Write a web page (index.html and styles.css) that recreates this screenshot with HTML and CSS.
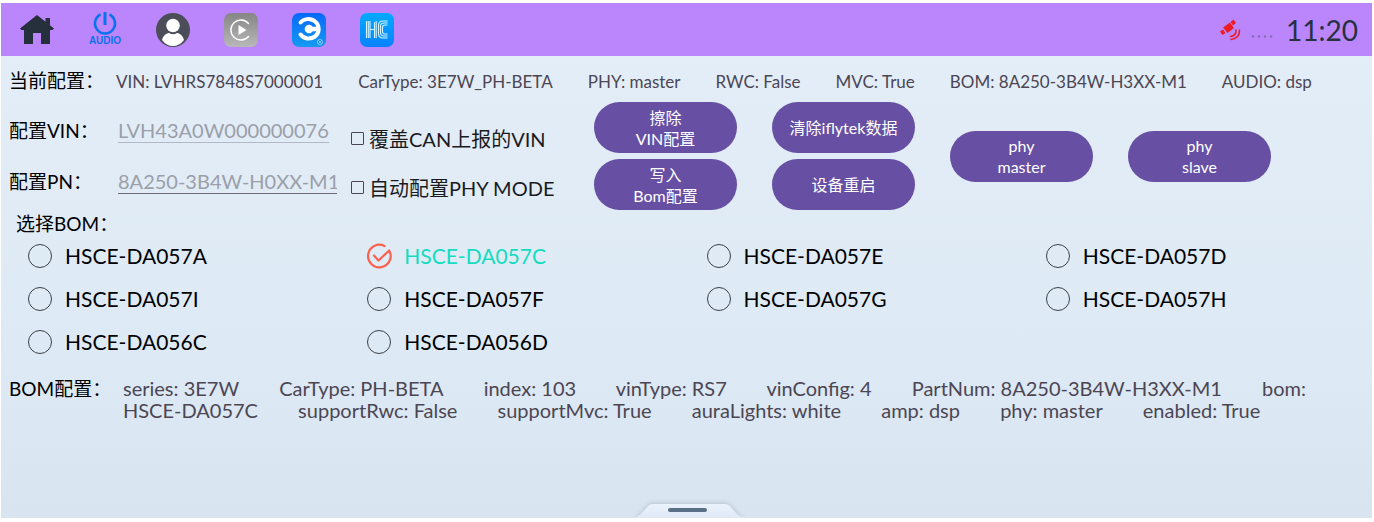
FILE: index.html
```html
<!DOCTYPE html>
<html lang="zh-CN">
<head>
<meta charset="utf-8">
<title>BOM配置</title>
<link rel="stylesheet" href="styles.css">
</head>
<body>
<div class="screen">
  <header class="topbar">
    <nav class="apps">
      <button class="app" aria-label="Home">
        <svg width="36" height="36" viewBox="0 0 36 36"><path fill="#25303c" d="M18 3 35 16.500 33.500 18H31V32H22V21H14V32H5V18H2.500L1 16.500ZM26.500 6H31V15L26.500 11Z"/></svg>
      </button>
      <button class="app" aria-label="Audio power">
        <svg width="36" height="36" viewBox="0 0 36 36"><g fill="none" stroke="#0a72f0" stroke-width="2.600"><path d="M13.500 2.500A10 10 0 1 0 22.500 2.500"/><path d="M18 0V13" stroke-width="3"/></g><text class="app-caption" x="18" y="32" text-anchor="middle" fill="#0a72f0">AUDIO</text></svg>
      </button>
      <button class="app" aria-label="User">
        <svg width="36" height="36" viewBox="0 0 36 36"><circle cx="18" cy="18" r="17" fill="#4b4e59"/><circle cx="18" cy="13.500" r="6.800" fill="#fff"/><path fill="#fff" d="M7 28C8 23.500 12 21 14 21Q18 23.500 22 21C24 21 28 23.500 29 28Q24.500 34 18 34T7 28Z"/></svg>
      </button>
      <button class="app" aria-label="CarPlay">
        <svg width="36" height="36" viewBox="0 0 36 36"><defs><linearGradient id="gray" x2="0" y2="1"><stop stop-color="#858585"/><stop offset="1" stop-color="#b8b8b8"/></linearGradient></defs><rect x="1" y="1" width="34" height="34" rx="7" fill="url(#gray)"/><path d="M25.500 11.500A10 10 0 1 0 25.500 24.500" fill="none" stroke="#fff" stroke-width="1.400" stroke-linecap="round"/><path d="M15.500 13V23L23.500 18Z" fill="#fff"/></svg>
      </button>
      <button class="app" aria-label="CarLife">
        <svg width="36" height="36" viewBox="0 0 36 36"><defs><linearGradient id="blue" x2="0" y2="1"><stop stop-color="#0868fa"/><stop offset="1" stop-color="#159af0"/></linearGradient></defs><rect x="1" y="1" width="34" height="34" rx="7" fill="url(#blue)"/><path d="M9.500 10.500C13 6.500 19 6 23.500 9C29.500 13.500 28.500 21 24 24.500C19 28 13 27 9.500 22.500" fill="none" stroke="#fff" stroke-width="4" stroke-linecap="round"/><path d="M18 17H27" stroke="#fff" stroke-width="4.500"/><circle cx="18" cy="17" r="4.300" fill="#fff"/><g fill="none" stroke="#8ccaff" stroke-width=".8"><circle cx="29" cy="30" r="2.600"/><path d="M27 28 31 32M31 28 27 32"/></g></svg>
      </button>
      <button class="app" aria-label="HiCar">
        <svg width="36" height="36" viewBox="0 0 36 36"><defs><linearGradient id="cyan" x2="0" y2="1"><stop stop-color="#00aaff"/><stop offset="1" stop-color="#0a82ff"/></linearGradient></defs><rect x="1" y="1" width="34" height="34" rx="7" fill="url(#cyan)"/><g fill="none" stroke="#d5f5ff" stroke-width="1.100"><path d="M7.500 9V26M9.300 9V26M11 9V26"/><path d="M11 17.500H16M15.500 10V26M17.200 9V26"/><path d="M28.500 9H24Q19.500 9 19.500 13.500V21.500Q19.500 26 24 26H28.500M28.500 11H25Q21.500 11 21.500 14.500V20.500Q21.500 24 25 24H28.500M28.500 13H26Q23.500 13 23.500 15.500V19.500Q23.500 22 26 22H28.500"/></g></svg>
      </button>
    </nav>
    <div class="status">
      <svg width="24" height="24" viewBox="0 0 24 24"><g fill="#ee1c25"><path d="M5 9.500 12 4.500 16 10 9.500 15Z"/><path d="M12.500 4 15.500 1.500 18 5 15 7.500ZM2 13.500 5 11.500 7.500 15 4.500 17Z"/></g><g fill="none" stroke="#ee1c25" stroke-width="1.500" stroke-linecap="round"><path d="M18 12Q18.500 17.500 12.500 18.500M21.500 12Q22 20 13 21.500"/></g></svg>
      <svg width="24" height="24" viewBox="0 0 24 24"><g fill="#8b6cb4"><circle cx="3" cy="18.500" r="1.300"/><circle cx="9" cy="18.500" r="1.300"/><circle cx="15" cy="18.500" r="1.300"/><circle cx="21" cy="18.500" r="1.300"/></g></svg>
      <time class="clock">11:20</time>
    </div>
  </header>

  <main class="content">
    <section class="current">
      <h2 class="heading">当前配置：</h2>
      <div class="facts">
        <span>VIN: LVHRS7848S7000001</span><span>CarType: 3E7W_PH-BETA</span><span>PHY: master</span><span>RWC: False</span><span>MVC: True</span><span>BOM: 8A250-3B4W-H3XX-M1</span><span>AUDIO: dsp</span>
      </div>
    </section>

    <form class="setup">
      <div class="fields">
        <label class="heading" for="vin">配置VIN：</label>
        <input class="field field-vin" id="vin" type="text" placeholder="LVH43A0W000000076">
        <label class="heading" for="pn">配置PN：</label>
        <input class="field field-pn" id="pn" type="text" placeholder="8A250-3B4W-H0XX-M1">
      </div>
      <div class="checks">
        <label class="check"><input type="checkbox">覆盖CAN上报的VIN</label>
        <label class="check"><input type="checkbox">自动配置PHY MODE</label>
      </div>
      <div class="actions">
        <div class="stack">
          <button class="pill" type="button">擦除<br>VIN配置</button>
          <button class="pill" type="button">写入<br>Bom配置</button>
        </div>
        <div class="stack">
          <button class="pill" type="button">清除iflytek数据</button>
          <button class="pill" type="button">设备重启</button>
        </div>
        <div class="stack"><button class="pill" type="button">phy<br>master</button></div>
        <div class="stack"><button class="pill" type="button">phy<br>slave</button></div>
      </div>
    </form>

    <fieldset class="bom">
      <legend class="heading">选择BOM：</legend>
      <div class="options">
        <label class="option"><input type="radio" name="bom"><span>HSCE-DA057A</span></label>
        <label class="option"><input type="radio" name="bom" checked><svg class="tick" width="26" height="26" viewBox="0 0 26 26"><path d="M18.500 3A11.300 11.300 0 1 0 23.200 7.500L12.500 17.500 8 12.500" fill="none" stroke="#f9634e" stroke-width="2.200" stroke-linecap="round" stroke-linejoin="round"/></svg><span>HSCE-DA057C</span></label>
        <label class="option"><input type="radio" name="bom"><span>HSCE-DA057E</span></label>
        <label class="option"><input type="radio" name="bom"><span>HSCE-DA057D</span></label>
        <label class="option"><input type="radio" name="bom"><span>HSCE-DA057I</span></label>
        <label class="option"><input type="radio" name="bom"><span>HSCE-DA057F</span></label>
        <label class="option"><input type="radio" name="bom"><span>HSCE-DA057G</span></label>
        <label class="option"><input type="radio" name="bom"><span>HSCE-DA057H</span></label>
        <label class="option"><input type="radio" name="bom"><span>HSCE-DA056C</span></label>
        <label class="option"><input type="radio" name="bom"><span>HSCE-DA056D</span></label>
      </div>
    </fieldset>

    <section class="detail">
      <h2 class="heading">BOM配置：</h2>
      <p class="props"><span>series: 3E7W</span> <span>CarType: PH-BETA</span> <span>index: 103</span> <span>vinType: RS7</span> <span>vinConfig: 4</span> <span>PartNum: 8A250-3B4W-H3XX-M1</span> <span>bom: HSCE-DA057C</span> <span>supportRwc: False</span> <span>supportMvc: True</span> <span>auraLights: white</span> <span>amp: dsp</span> <span>phy: master</span> <span>enabled: True</span></p>
    </section>
  </main>

  <button class="drawer" aria-label="Open drawer">
    <svg width="120" height="20" viewBox="0 0 120 20"><defs><linearGradient id="tab" x2="0" y2="1"><stop stop-color="#eaf2fc"/><stop offset="1" stop-color="#dfe9f6"/></linearGradient></defs><path class="tab" d="M6 20Q11 19 14 16L21 8Q23 6 26 6H98Q101 6 103 8L110 16Q113 19 118 20Z" fill="url(#tab)"/><rect x="41" y="10" width="39" height="4" rx="2" fill="#5a7084"/></svg>
  </button>
</div>
</body>
</html>
```
FILE: styles.css
```css
* {
  box-sizing: border-box;
}

body {
  margin: 0;
  padding: 3px 2px 4px 1px;
  background: #fff;
  font-family: Lato, "Noto Sans CJK SC", sans-serif;
}

button,
input {
  font: inherit;
}

.screen {
  display: flex;
  flex-direction: column;
  min-height: calc(100vh - 7px);
  background: linear-gradient(#e4eef8, #dde9f4 70%, #d8e4ef);
}

.topbar {
  display: flex;
  align-items: center;
  justify-content: space-between;
  height: 53px;
  padding: 0 14px 0 18px;
  background: #bb86fc;
}

.apps {
  display: flex;
  gap: 32px;
}

.app {
  display: flex;
  padding: 0;
  border: 0;
  background: none;
}

.app svg {
  overflow: visible;
}

.app-caption {
  font: 700 10px "Liberation Sans", sans-serif;
}

.status {
  display: flex;
  align-items: center;
  gap: 8px;
}

.clock {
  margin-left: 4px;
  color: #27303e;
  font-size: 28px;
}

.content {
  display: flex;
  flex-direction: column;
}

.heading {
  margin: 0;
  padding: 0;
  color: #000;
  font-size: 19px;
  font-weight: 400;
  line-height: 24px;
  white-space: nowrap;
}

.current {
  display: flex;
  align-items: center;
  height: 46px;
  padding: 4px 8px 0;
}

.current .heading {
  width: 107px;
}

.facts {
  display: flex;
  gap: 35px;
  color: #4c4653;
  font-size: 17px;
  white-space: nowrap;
}

.setup {
  display: flex;
  align-items: center;
  height: 108px;
}

.fields {
  display: grid;
  grid-template-columns: 109px 224px;
  grid-auto-rows: 51px;
  align-items: center;
  padding-left: 8px;
}

.field {
  height: 24px;
  padding: 0;
  border: 0;
  border-bottom: 1px solid #6f6a78;
  outline: 0;
  background: none;
  color: #4c4653;
  font-size: 20px;
}

.field::placeholder {
  color: #9b9fa9;
  opacity: 1;
}

.field-vin {
  width: 211px;
  border-color: #b3b9c4;
}

.field-pn {
  width: 219px;
}

.checks {
  display: grid;
  grid-auto-rows: 49px;
  align-items: center;
  width: 252px;
  padding: 14px 0 0 9px;
}

.check {
  display: flex;
  align-items: center;
  gap: 5px;
  color: #1b1b1f;
  font-size: 20px;
  white-space: nowrap;
}

.check input {
  appearance: none;
  width: 13px;
  height: 13px;
  margin: 0;
  border: 1px solid #4a4551;
  border-radius: 1px;
}

.check input:checked {
  background: #6750a4;
}

.actions {
  display: flex;
  gap: 35px;
}

.stack {
  display: flex;
  flex-direction: column;
  justify-content: center;
  gap: 6px;
}

.pill {
  width: 143px;
  height: 51px;
  padding: 0;
  border: 0;
  border-radius: 26px;
  background: #6750a4;
  color: #fff;
  font-size: 16px;
  line-height: 21px;
}

.bom {
  min-width: 0;
  margin: 0;
  padding: 0;
  border: 0;
}

.bom .heading {
  padding: 4px 0 0 15px;
  line-height: 20px;
}

.options {
  display: grid;
  grid-template-columns: repeat(4, 1fr);
  grid-auto-rows: 43px;
  padding-left: 26px;
  margin-right: -12px;
}

.option {
  display: flex;
  align-items: center;
  gap: 12px;
  color: #000;
  font-size: 21px;
}

.option input {
  appearance: none;
  width: 24px;
  height: 24px;
  margin: 0 1px;
  border: 1px solid #3c4046;
  border-radius: 50%;
}

.option input:checked {
  display: none;
}

.option input:checked ~ span {
  color: #14dcc0;
}

.detail {
  display: flex;
  padding: 14px 30px 0 8px;
}

.detail .heading {
  flex: none;
  width: 114px;
}

.props {
  margin: 0;
  color: #4c4653;
  font-size: 20px;
  line-height: 22px;
}

.props span {
  margin-right: 35px;
}

.drawer {
  display: flex;
  align-self: center;
  margin-top: auto;
  padding: 0;
  border: 0;
  background: none;
}

.tab {
  filter: drop-shadow(0 -1px 2px #b6c4d2);
}
```
